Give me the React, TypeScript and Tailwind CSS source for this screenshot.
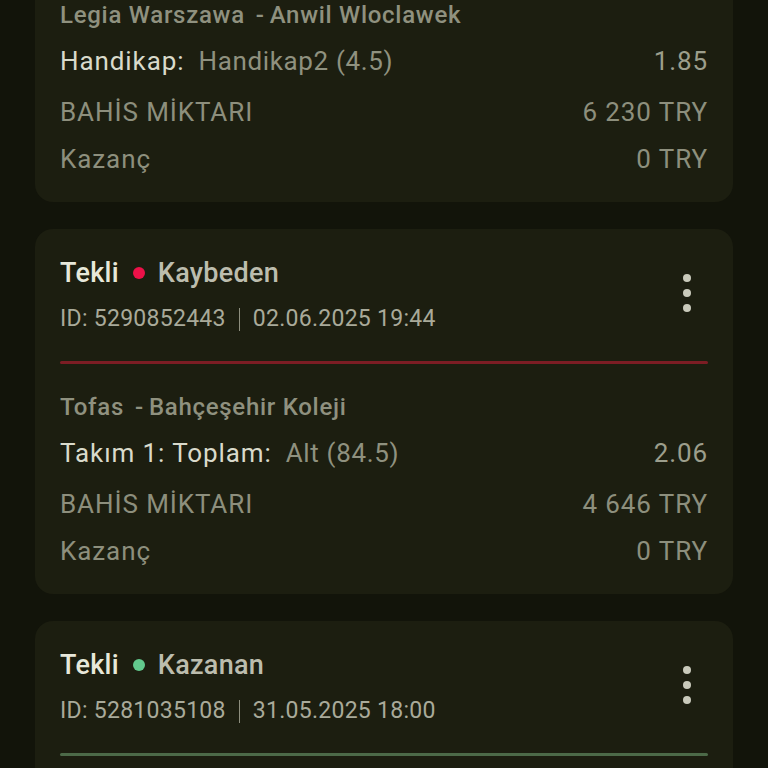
import { Fragment } from "react";

type Bet = {
  id: string;
  date: string;
  status: "lost" | "won";
  match: [string, string];
  market: string;
  pick: string;
  odds: string;
  stake: string;
  payout: string;
};

const bets: Bet[] = [
  {
    id: "5291204417",
    date: "03.06.2025 20:15",
    status: "lost",
    match: ["Legia Warszawa", "Anwil Wloclawek"],
    market: "Handikap:",
    pick: "Handikap2 (4.5)",
    odds: "1.85",
    stake: "6 230 TRY",
    payout: "0 TRY",
  },
  {
    id: "5290852443",
    date: "02.06.2025 19:44",
    status: "lost",
    match: ["Tofas", "Bahçeşehir Koleji"],
    market: "Takım 1: Toplam:",
    pick: "Alt (84.5)",
    odds: "2.06",
    stake: "4 646 TRY",
    payout: "0 TRY",
  },
  {
    id: "5281035108",
    date: "31.05.2025 18:00",
    status: "won",
    match: ["Real Madrid", "Barcelona"],
    market: "Toplam:",
    pick: "Üst (165.5)",
    odds: "1.90",
    stake: "3 200 TRY",
    payout: "6 080 TRY",
  },
];

function Kebab() {
  return (
    <div className="flex flex-col items-center gap-[7px]">
      <span className="w-[8px] h-[8px] rounded-full bg-[#c9cabb]" />
      <span className="w-[8px] h-[8px] rounded-full bg-[#c9cabb]" />
      <span className="w-[8px] h-[8px] rounded-full bg-[#c9cabb]" />
    </div>
  );
}

function BetCard({ bet }: { bet: Bet }) {
  const lost = bet.status === "lost";
  return (
    <div className="bg-[#1c1e10] rounded-[18px] px-[25px] pt-[28px] pb-[26px]">
      {/* Header */}
      <div className="flex items-center justify-between">
        <div>
          <div className="flex items-center h-[32px] text-[27px] font-medium leading-none tracking-[0.01em]">
            <span className="text-[#e7e8da]">Tekli</span>
            <span
              className={`w-[12px] h-[12px] rounded-full ml-[14px] mr-[13px] ${
                lost ? "bg-[#ec1148]" : "bg-[#62c98d]"
              }`}
            />
            <span className="text-[#bcbdae]">{lost ? "Kaybeden" : "Kazanan"}</span>
          </div>
          <div className="flex items-center h-[30px] mt-[15px] text-[23px] tracking-[0.012em] text-[#a9aa9a]">
            <span>ID: {bet.id}</span>
            <span className="w-px h-[23px] bg-[#8d8e7e] mx-[13px]" />
            <span>{bet.date}</span>
          </div>
        </div>
        <div className="mr-[17px] -mt-[5px]">
          <Kebab />
        </div>
      </div>

      {/* Divider */}
      <div
        className={`h-[3px] mt-[27px] rounded-full ${
          lost ? "bg-[#7c1d24]" : "bg-[#4c6a48]"
        }`}
      />

      {/* Body */}
      <div className="mt-[28px] h-[30px] flex items-center text-[24px] font-medium tracking-[0.03em] text-[#8f917f]">
        {bet.match.map((m, i) => (
          <Fragment key={m}>
            {i > 0 && <span className="ml-[11px] mr-[5px]">-</span>}
            <span>{m}</span>
          </Fragment>
        ))}
      </div>
      <div className="mt-[14px] h-[34px] flex items-center justify-between text-[26px] tracking-[0.035em]">
        <div className="flex items-center">
          <span className="text-[#d9dacb]">{bet.market}</span>
          <span className="ml-[14px] tracking-[0.025em] text-[#8f917f]">{bet.pick}</span>
        </div>
        <span className="text-[#9c9e8c]">{bet.odds}</span>
      </div>
      <div className="mt-[17px] h-[34px] flex items-center justify-between text-[26px] tracking-[0.035em] text-[#8d8f7d]">
        <span>BAHİS MİKTARI</span>
        <span>{bet.stake}</span>
      </div>
      <div className="mt-[13px] h-[34px] flex items-center justify-between text-[26px] tracking-[0.035em] text-[#8d8f7d]">
        <span>Kazanç</span>
        <span>{bet.payout}</span>
      </div>
    </div>
  );
}

export default function App() {
  return (
    <div
      className="h-[768px] overflow-hidden bg-[#12140a]"
      style={{ fontFamily: "Roboto, 'Liberation Sans', sans-serif" }}
    >
      <div className="px-[35px] -mt-[163px] flex flex-col gap-[27px]">
        {bets.map((b) => (
          <BetCard key={b.id} bet={b} />
        ))}
      </div>
    </div>
  );
}
